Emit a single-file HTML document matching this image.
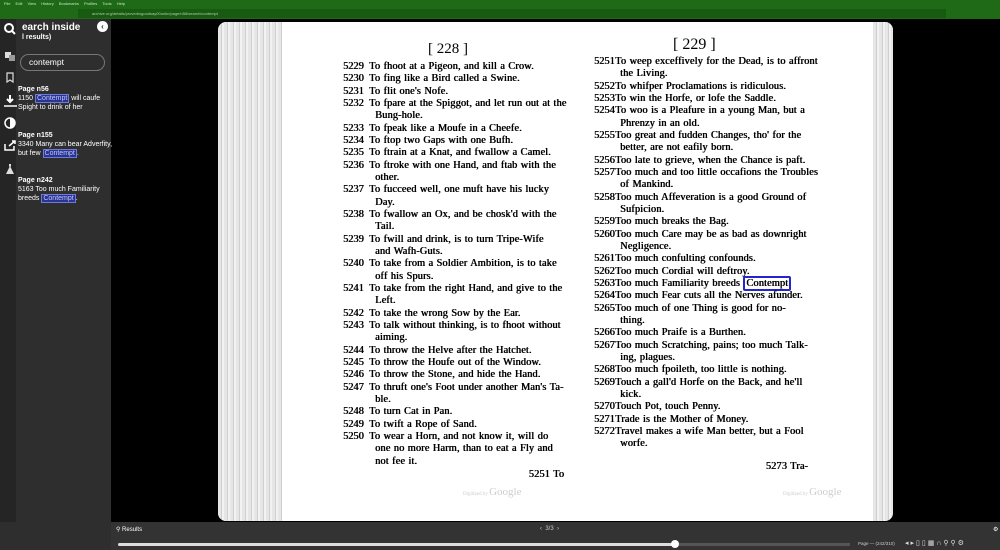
<!DOCTYPE html>
<html><head><meta charset="utf-8"><style>
*{margin:0;padding:0;box-sizing:border-box}
html,body{width:1000px;height:550px;overflow:hidden}
body{background:#000;font-family:"Liberation Sans",sans-serif;position:relative}
.abs{position:absolute}
#menu{left:0;top:0;width:1000px;height:8px;background:#1e6a17;color:#cfe3c9;font-size:4px;line-height:8px;padding-left:4px;word-spacing:4px}
#nav{left:0;top:8px;width:1000px;height:11px;background:#1e6a17}
#url{left:78px;top:9px;width:868px;height:9px;background:#185a12;color:#a9cfa0;font-size:4px;line-height:9px;padding-left:14px}
#side{left:0;top:19px;width:111px;height:531px;background:#2e2e2e}
#strip{left:0;top:19px;width:16px;height:503px;background:#252525}
.st{color:#fff;font-size:7px;line-height:9px}
.hl{color:#bcc6ff;background:#2b3590;border:1px solid #6c7bd8;padding:0 1px}
#spread{left:218px;top:22px;width:675px;height:499px;background:#fff;border-radius:8px;overflow:hidden}
.stripes{background:repeating-linear-gradient(90deg,#e6e6e6 0 3px,#cfcfcf 3px 4px,#f2f2f2 4px 6px)}
.col{position:absolute;font-family:"Liberation Serif",serif;font-size:10.3px;line-height:12.33px;color:#000;text-shadow:0.5px 0 0 #000;letter-spacing:0.15px;word-spacing:0.6px}
.col div{white-space:nowrap;height:12.33px}
.col .n{display:inline-block;width:26px;letter-spacing:0}
.col .c{padding-left:32px}
.col.r .n{width:21px}.col.r .c{padding-left:26px}
#bot{left:111px;top:522px;width:889px;height:28px;background:#333}
</style></head><body>
<div id="menu" class="abs">File Edit View History Bookmarks Profiles Tools Help</div>
<div id="nav" class="abs"></div>
<div id="url" class="abs">archive.org/details/proverbsgoodsay00unkn/page/n56/search/contempt</div>
<div id="side" class="abs"></div>
<div id="strip" class="abs"></div>
<svg class="abs" style="left:3px;top:22px" width="14" height="160" viewBox="0 0 14 160">
<circle cx="6" cy="6" r="4" fill="none" stroke="#fff" stroke-width="2"/><line x1="9" y1="9" x2="12" y2="12" stroke="#fff" stroke-width="2"/>
<rect x="2" y="30" width="6" height="6" fill="#ddd"/><rect x="6" y="33" width="6" height="6" fill="#999"/>
<path d="M4 51h6v9l-3-2-3 2z" fill="none" stroke="#ddd" stroke-width="1.2"/>
<path d="M7 73v7M4 77l3 3 3-3" stroke="#fff" stroke-width="2" fill="none"/><line x1="1" y1="84" x2="14" y2="84" stroke="#fff" stroke-width="1.5"/>
<circle cx="7" cy="101" r="5" fill="none" stroke="#fff" stroke-width="1.5"/><path d="M7 96a5 5 0 0 1 0 10z" fill="#fff"/>
<path d="M2 122v6h9v-4M6 124l6-5M9 119h3v3" stroke="#fff" stroke-width="1.5" fill="none"/>
<path d="M7 144l-4 8h8z M6 142h2v3h-2z" fill="#ddd"/>
</svg>
<div class="abs" style="left:22px;top:22px;color:#fff;font-weight:bold;font-size:10px">earch inside</div>
<div class="abs" style="left:22px;top:34px;color:#fff;font-weight:bold;font-size:7px">l results)</div>
<div class="abs" style="left:97px;top:21px;width:11px;height:11px;border-radius:50%;background:#fff;color:#333;font-size:8px;line-height:11px;text-align:center;font-weight:bold">‹</div>
<div class="abs" style="left:20px;top:54px;width:85px;height:17px;border:1px solid #777;border-radius:9px;color:#fff;font-size:8.5px;line-height:15px;padding-left:8px">contempt</div>
<div class="abs st" style="left:18px;top:85px;width:92px;white-space:nowrap"><b>Page n56</b><br>1150 <span class="hl">Contempt</span> will caufe<br>Spight to drink of her</div>
<div class="abs st" style="left:18px;top:131px;width:92px;white-space:nowrap"><b>Page n155</b><br>3340 Many can bear Adverfity,<br>but few <span class="hl">Contempt</span>.</div>
<div class="abs st" style="left:18px;top:176px;width:92px;white-space:nowrap"><b>Page n242</b><br>5163 Too much Familiarity<br>breeds <span class="hl">Contempt</span>.</div>

<div id="spread" class="abs">
 <div class="abs stripes" style="left:0;top:0;width:64px;height:499px"></div>
 <div class="abs stripes" style="left:655px;top:0;width:20px;height:499px"></div>
 <div class="abs" style="left:210px;top:19px;font-family:'Liberation Serif',serif;font-size:15px">[ 228 ]</div>
 <div class="abs" style="left:455px;top:14px;font-family:'Liberation Serif',serif;font-size:16px">[ 229 ]</div>
 <div class="abs" style="left:245px;top:464px;color:#ccc;font-size:11px;font-family:'Liberation Serif',serif"><span style="font-size:5px">Digitized by </span>Google</div>
 <div class="abs" style="left:565px;top:464px;color:#ccc;font-size:11px;font-family:'Liberation Serif',serif"><span style="font-size:5px">Digitized by </span>Google</div>
</div>

<div class="col" style="left:343px;top:61px;width:225px">
<div><span class="n">5229</span>To fhoot at a Pigeon, and kill a Crow.</div>
<div><span class="n">5230</span>To fing like a Bird called a Swine.</div>
<div><span class="n">5231</span>To flit one's Nofe.</div>
<div><span class="n">5232</span>To fpare at the Spiggot, and let run out at the</div>
<div class="c">Bung-hole.</div>
<div><span class="n">5233</span>To fpeak like a Moufe in a Cheefe.</div>
<div><span class="n">5234</span>To ftop two Gaps with one Bufh.</div>
<div><span class="n">5235</span>To ftrain at a Knat, and fwallow a Camel.</div>
<div><span class="n">5236</span>To ftroke with one Hand, and ftab with the</div>
<div class="c">other.</div>
<div><span class="n">5237</span>To fucceed well, one muft have his lucky</div>
<div class="c">Day.</div>
<div><span class="n">5238</span>To fwallow an Ox, and be chosk'd with the</div>
<div class="c">Tail.</div>
<div><span class="n">5239</span>To fwill and drink, is to turn Tripe-Wife</div>
<div class="c">and Wafh-Guts.</div>
<div><span class="n">5240</span>To take from a Soldier Ambition, is to take</div>
<div class="c">off his Spurs.</div>
<div><span class="n">5241</span>To take from the right Hand, and give to the</div>
<div class="c">Left.</div>
<div><span class="n">5242</span>To take the wrong Sow by the Ear.</div>
<div><span class="n">5243</span>To talk without thinking, is to fhoot without</div>
<div class="c">aiming.</div>
<div><span class="n">5244</span>To throw the Helve after the Hatchet.</div>
<div><span class="n">5245</span>To throw the Houfe out of the Window.</div>
<div><span class="n">5246</span>To throw the Stone, and hide the Hand.</div>
<div><span class="n">5247</span>To thruft one's Foot under another Man's Ta-</div>
<div class="c">ble.</div>
<div><span class="n">5248</span>To turn Cat in Pan.</div>
<div><span class="n">5249</span>To twift a Rope of Sand.</div>
<div><span class="n">5250</span>To wear a Horn, and not know it, will do</div>
<div class="c">one no more Harm, than to eat a Fly and</div>
<div class="c">not fee it.</div>
<div style="text-align:right;padding-right:4px;margin-top:1px">5251 To</div>
</div>

<div class="col r" style="left:594px;top:56px;width:220px">
<div><span class="n">5251</span>To weep exceffively for the Dead, is to affront</div>
<div class="c">the Living.</div>
<div><span class="n">5252</span>To whifper Proclamations is ridiculous.</div>
<div><span class="n">5253</span>To win the Horfe, or lofe the Saddle.</div>
<div><span class="n">5254</span>To woo is a Pleafure in a young Man, but a</div>
<div class="c">Phrenzy in an old.</div>
<div><span class="n">5255</span>Too great and fudden Changes, tho' for the</div>
<div class="c">better, are not eafily born.</div>
<div><span class="n">5256</span>Too late to grieve, when the Chance is paft.</div>
<div><span class="n">5257</span>Too much and too little occafions the Troubles</div>
<div class="c">of Mankind.</div>
<div><span class="n">5258</span>Too much Affeveration is a good Ground of</div>
<div class="c">Sufpicion.</div>
<div><span class="n">5259</span>Too much breaks the Bag.</div>
<div><span class="n">5260</span>Too much Care may be as bad as downright</div>
<div class="c">Negligence.</div>
<div><span class="n">5261</span>Too much confulting confounds.</div>
<div><span class="n">5262</span>Too much Cordial will deftroy.</div>
<div><span class="n">5263</span>Too much Familiarity breeds <span style="border:2px solid #2323d0;border-radius:2px;padding:0 1px">Contempt</span></div>
<div><span class="n">5264</span>Too much Fear cuts all the Nerves afunder.</div>
<div><span class="n">5265</span>Too much of one Thing is good for no-</div>
<div class="c">thing.</div>
<div><span class="n">5266</span>Too much Praife is a Burthen.</div>
<div><span class="n">5267</span>Too much Scratching, pains; too much Talk-</div>
<div class="c">ing, plagues.</div>
<div><span class="n">5268</span>Too much fpoileth, too little is nothing.</div>
<div><span class="n">5269</span>Touch a gall'd Horfe on the Back, and he'll</div>
<div class="c">kick.</div>
<div><span class="n">5270</span>Touch Pot, touch Penny.</div>
<div><span class="n">5271</span>Trade is the Mother of Money.</div>
<div><span class="n">5272</span>Travel makes a wife Man better, but a Fool</div>
<div class="c">worfe.</div>
<div style="text-align:right;padding-right:6px;margin-top:10px">5273 Tra-</div>
</div>

<div id="bot" class="abs"></div>
<div class="abs" style="left:116px;top:526px;color:#fff;font-size:6px">&#9906; Results</div>
<div class="abs" style="left:540px;top:526px;color:#ccc;font-size:6px">‹ &nbsp;3/3 &nbsp;›</div>
<div class="abs" style="left:993px;top:526px;color:#fff;font-size:6px">⚙</div>
<div class="abs" style="left:118px;top:543px;width:557px;height:3px;background:#ddd;border-radius:2px"></div>
<div class="abs" style="left:675px;top:543px;width:175px;height:3px;background:#555"></div>
<div class="abs" style="left:671px;top:540px;width:8px;height:8px;border-radius:50%;background:#fff"></div>
<div class="abs" style="left:858px;top:541px;color:#ccc;font-size:4.5px">Page — (242/310)</div>
<div class="abs" style="left:905px;top:539px;color:#ddd;font-size:7px;letter-spacing:2px">◂▸▯▯▦∩⚲⚲⚙</div>
</body></html>
